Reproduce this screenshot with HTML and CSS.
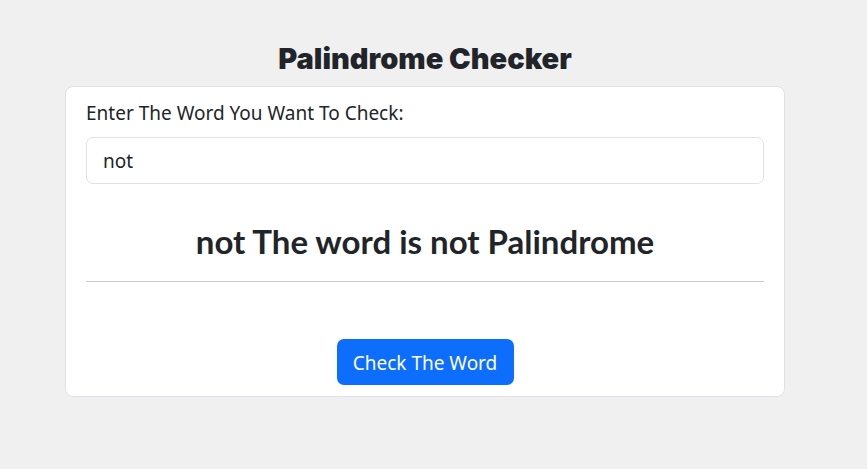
FILE: index.html
```html
<!DOCTYPE html>
<html>
<head>
<meta charset="utf-8">
<link rel="stylesheet" href="styles.css">
</head>
<body>
<main class="page">
  <h1 class="title">Palindrome Checker</h1>
  <div class="card">
    <label class="label" for="word">Enter The Word You Want To Check:</label>
    <input class="input" id="word" type="text" value="not">
    <h3 class="result">not The word is not Palindrome</h3>
    <hr class="rule">
    <div class="actions">
      <button class="btn">Check The Word</button>
    </div>
  </div>
</main>
</body>
</html>
```

FILE: styles.css
```css
* { box-sizing: border-box; }
html, body { margin: 0; padding: 0; }
body {
  background: #f0f0f0;
  font-family: "Noto Sans", "Open Sans", sans-serif;
  color: #212529;
}
.page {
  margin-left: 65px;
  width: 720px;
}
.title {
  margin: 0 0 8px 0;
  padding-top: 40px;
  font-family: Inter, Lato, sans-serif;
  font-weight: 900;
  font-size: 29px;
  line-height: 38px;
  text-align: center;
}
.card {
  height: 311px;
  background: #fff;
  border: 1px solid #dee2e6;
  border-radius: 8px;
  padding: 11px 20px 10px 20px;
  display: flex;
  flex-direction: column;
}
.label {
  display: block;
  font-size: 19px;
  line-height: 30px;
  height: 30px;
}
.input {
  margin-top: 9px;
  height: 47px;
  width: 100%;
  border: 1px solid #dee2e6;
  border-radius: 7px;
  padding: 0 16px;
  font-family: inherit;
  font-size: 19px;
  color: #212529;
  outline: none;
}
.result {
  margin: 36px 0 0 0;
  font-family: Lato, "Noto Sans", sans-serif;
  font-size: 33px;
  line-height: 42px;
  font-weight: 700;
  text-align: center;
}
.rule {
  margin: 19px 0 0 0;
  border: 0;
  border-top: 1px solid #c8c8c8;
}
.actions {
  margin-top: 57px;
  display: flex;
  justify-content: center;
}
.btn {
  height: 46px;
  width: 177px;
  padding-top: 2px;
  background: #0d6efd;
  color: #fff;
  border: 0;
  border-radius: 7px;
  font-family: inherit;
  font-size: 19px;
}
```
